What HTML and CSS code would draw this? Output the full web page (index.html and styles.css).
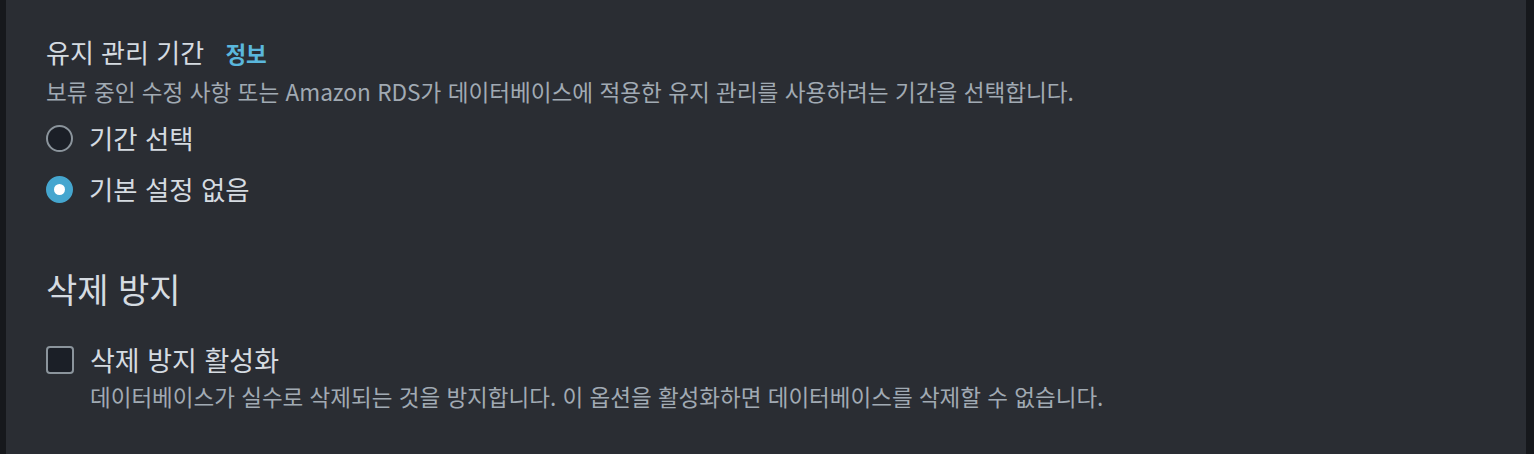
FILE: index.html
```html
<!DOCTYPE html>
<html lang="ko">
  <head>
    <meta charset="UTF-8" />
    <meta name="viewport" content="width=device-width, initial-scale=1.0" />
    <title>데이터베이스 설정</title>
    <link rel="stylesheet" href="styles.css">
  </head>
  <body>
    <div class="frame">
      <div class="panel">
        <section class="field">
          <div class="field-label">
            유지 관리 기간 <a class="info" href="#">정보</a>
          </div>
          <div class="field-desc">
            보류 중인 수정 사항 또는 Amazon RDS가 데이터베이스에 적용한 유지 관리를 사용하려는 기간을 선택합니다.
          </div>
          <div class="radio-group">
            <label class="radio">
              <span class="radio-dot"></span>
              기간 선택
            </label>
            <label class="radio">
              <span class="radio-dot checked"></span>
              기본 설정 없음
            </label>
          </div>
        </section>

        <section class="protect">
          <h2 class="heading">삭제 방지</h2>
          <label class="check">
            <span class="check-box"></span>
            <span class="check-text">
              <span class="check-label">삭제 방지 활성화</span>
              <span class="check-desc">데이터베이스가 실수로 삭제되는 것을 방지합니다. 이 옵션을 활성화하면 데이터베이스를 삭제할 수 없습니다.</span>
            </span>
          </label>
        </section>
      </div>
    </div>
  </body>
</html>
```

FILE: styles.css
```css
body {
  margin: 0;
  background-color: #16181c;
  font-family: "Noto Sans CJK KR", "Noto Sans", sans-serif;
  color: #d5dbe1;
}

.frame {
  height: 454px;
  padding: 0 8px 0 6px;
}

.panel {
  height: 100%;
  background-color: #2a2d33;
  padding: 35px 40px 0 40px;
  box-sizing: border-box;
}

.field-label {
  font-size: 26px;
  line-height: 34px;
}

.info {
  margin-left: 14px;
  color: #5ab7dc;
  font-weight: bold;
  font-size: 22.5px;
  text-decoration: none;
}

.field-desc {
  margin-top: 6px;
  font-size: 22.6px;
  line-height: 32px;
  color: #a1aab3;
}

.radio-group {
  margin-top: 10px;
  display: flex;
  flex-direction: column;
  gap: 11px;
}

.radio {
  display: flex;
  align-items: center;
  gap: 16px;
  font-size: 26.4px;
  line-height: 40px;
}

.radio-dot {
  width: 23px;
  height: 23px;
  border: 2px solid #8b949c;
  border-radius: 50%;
  background-color: #1b1f27;
  flex-shrink: 0;
}

.radio-dot.checked {
  border-color: #45a6cf;
  background-color: #45a6cf;
  position: relative;
}

.radio-dot.checked::after {
  content: "";
  position: absolute;
  left: 6px;
  top: 6px;
  width: 11px;
  height: 11px;
  border-radius: 50%;
  background-color: #fff;
}

.protect {
  margin-top: 58px;
}

.heading {
  margin: 0;
  font-size: 34px;
  font-weight: normal;
  line-height: 44px;
}

.check {
  margin-top: 31px;
  display: flex;
  align-items: flex-start;
  gap: 16px;
}

.check-box {
  margin-top: 4px;
  width: 24px;
  height: 24px;
  border: 2px solid #8b949c;
  border-radius: 4px;
  background-color: #1b1f27;
  flex-shrink: 0;
}

.check-text {
  display: flex;
  flex-direction: column;
}

.check-label {
  font-size: 27px;
  line-height: 36px;
}

.check-desc {
  margin-top: 3px;
  font-size: 22.5px;
  line-height: 30px;
  color: #a1aab3;
}
```
